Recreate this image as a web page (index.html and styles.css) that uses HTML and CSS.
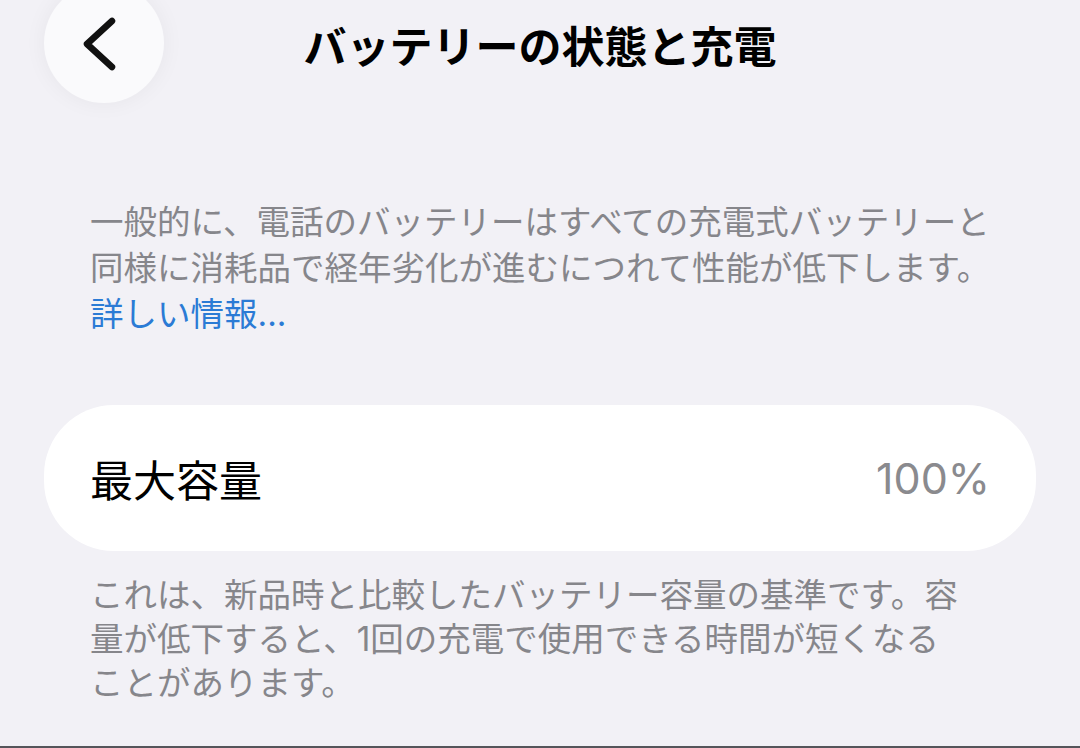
FILE: index.html
```html
<!DOCTYPE html>
<html lang="ja">
<head>
<meta charset="utf-8">
<title>バッテリーの状態と充電</title>
<link rel="stylesheet" href="styles.css">
</head>
<body>
<div class="page">
  <header class="nav">
    <div class="nav-side">
      <button class="back" aria-label="戻る">
        <svg width="120" height="120" viewBox="0 0 120 120">
          <path d="M68 38 L43 61 L68 84" fill="none" stroke="#111" stroke-width="6.5" stroke-linecap="round" stroke-linejoin="round"/>
        </svg>
      </button>
    </div>
    <h1 class="title">バッテリーの状態と充電</h1>
    <div class="nav-side"></div>
  </header>

  <p class="note intro">一般的に、電話のバッテリーはすべての充電式バッテリーと<br>同様に消耗品で経年劣化が進むにつれて性能が低下します。<br><a class="link" href="#">詳しい情報...</a></p>

  <div class="card">
    <span class="label">最大容量</span>
    <span class="value">100%</span>
  </div>

  <p class="note footer">これは、新品時と比較したバッテリー容量の基準です。容<br>量が低下すると、1回の充電で使用できる時間が短くなる<br>ことがあります。</p>
</div>
</body>
</html>
```

FILE: styles.css
```css
* { box-sizing: border-box; }

html, body {
  margin: 0;
  padding: 0;
  background: #f2f1f6;
}

body {
  font-family: "Inter", "Noto Sans CJK JP", sans-serif;
  color: #000;
  overflow: hidden;
}

.page {
  height: 748px;
  border-bottom: 2px solid #55555a;
  display: flex;
  flex-direction: column;
}

.nav {
  height: 88px;
  display: grid;
  grid-template-columns: 1fr auto 1fr;
  align-items: start;
}

.nav-side {
  padding-left: 44px;
}

.back {
  margin-top: -17px;
  width: 120px;
  height: 120px;
  border-radius: 50%;
  border: none;
  padding: 0;
  background: #fafafc;
  box-shadow: 0 0 22px rgba(0, 0, 0, 0.05);
  display: block;
}

.back svg { display: block; }

.title {
  margin: 0;
  font-family: "Noto Sans CJK JP", sans-serif;
  font-weight: 700;
  font-size: 43px;
  line-height: 88px;
  letter-spacing: 0;
}

.note {
  margin: 0;
  padding: 0 80px 0 90px;
  font-size: 33.5px;
  color: #86868b;
}

.intro {
  margin-top: 111px;
  line-height: 46px;
}

.link {
  color: #2b7bd5;
  text-decoration: none;
}

.card {
  margin: 68px 44px 0;
  height: 146px;
  border-radius: 70px;
  background: #fff;
  display: flex;
  align-items: center;
  justify-content: space-between;
  padding: 0 46px;
}

.label {
  font-family: "Noto Sans CJK JP", sans-serif;
  font-size: 43px;
  color: #000;
}

.value {
  font-family: "Inter", sans-serif;
  font-size: 43px;
  color: #8a8a8e;
}

.footer {
  margin-top: 22px;
  line-height: 44px;
}
```
